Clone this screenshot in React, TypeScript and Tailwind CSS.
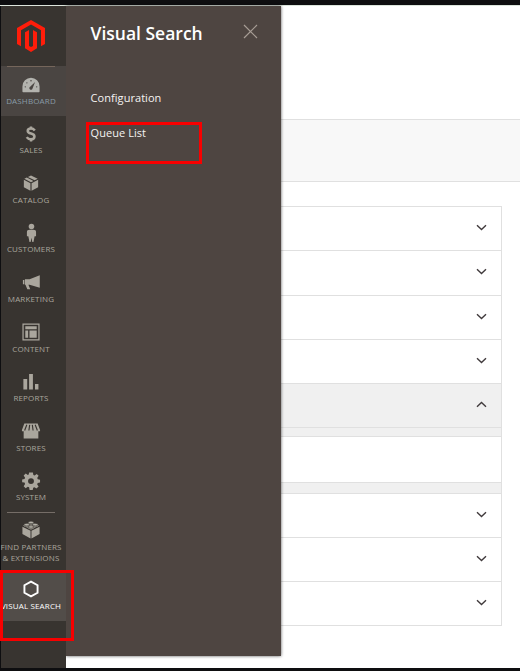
import type { ReactNode } from "react";

const icons: Record<string, ReactNode> = {
  dashboard: (
    <>
      <path d="M1 17.800V12.500a9 9 0 0 1 18 0v5.300q0 .8-.8.8H1.800q-.8 0-.8-.8Z" />
      <path d="m14.300 8-2.700 6.600a1.700 1.700 0 1 1-2.500-1.700Z" fill="#4a4542" />
      <g fill="#4a4542">
        <circle cx="4" cy="13" r=".7" />
        <circle cx="5.700" cy="8.800" r=".7" />
        <circle cx="10" cy="6.500" r=".8" />
        <circle cx="16" cy="13" r=".7" />
      </g>
    </>
  ),
  sales: (
    <>
      <path d="M14 6.300C12.800 4.800 11.600 4.300 10 4.300c-2.100 0-3.400 1-3.400 2.500 0 3.700 7 1.800 7 5.700 0 1.900-1.500 3-3.700 3-1.800 0-3.400-.7-4.400-2.200" fill="none" stroke="currentColor" strokeWidth="2.700" />
      <path d="M8.700 2h2.600v3H8.700zM8.700 15h2.600v3H8.700z" />
    </>
  ),
  catalog: (
    <>
      <path d="m2.500 6.700 6.900 3.500v8L2.500 14.500ZM17.500 6.700l-6.900 3.500v8l6.900-3.700Z" />
      <path d="m3 5.500 2.600-1.300 7 3.700L10 9.100ZM6.800 3.600 10 2l7 3.500-3.200 1.700Z" />
    </>
  ),
  customers: (
    <>
      <circle cx="10.500" cy="3.200" r="2.900" />
      <path d="M8.500 6.700h4q2.800 0 2.800 2.500v4.300h-1.500l-1.200 6h-1.200l-.9-4.400-.9 4.400H8.400l-1.200-6H5.700V9.200Q5.700 6.700 8.500 6.700Z" />
    </>
  ),
  marketing: (
    <path d="M19.200 3v13l-10.700-3.200H7.300l1.900 4.700H6.100L4.200 12.800H3.600V7.200H8.500ZM1.500 7.800h1.500v4.500H1.500Z" />
  ),
  content: (
    <>
      <path d="M1 1h18v18H1ZM2.300 2.300v15.400h15.400V2.300Z" fillRule="evenodd" />
      <path d="M4 4h12v3H4ZM4 8.300h3V16H4ZM8.400 8.300H16V16H8.400Z" />
    </>
  ),
  reports: <path d="M2 6.800h4v11H2ZM8 1.500h4v16.300H8ZM14.200 12h3.600v5.800h-3.600Z" />,
  stores: (
    <>
      <path d="M3 2h14l2.500 7v1.300H.5V9ZM2.300 10h15.400v8H2.300Z" />
      <path d="M5.600 3.500 3.300 9.500M8.600 3.500 7.800 9.500M11.400 3.500l.8 6M14.400 3.500l2.300 6" fill="none" stroke="#383430" strokeWidth="1.200" />
    </>
  ),
  system: (
    <path fillRule="evenodd" d="M8 1h4l.5 2.600 1.300.5 2.200-1.500 2 2-1.500 2.200.7 1.400 2.300.4v3l-2.500.5-.5 1.500 1.500 2.100-2.300 2.300-2.100-1.500-1.300.5-.5 2.500H8.500L8 16.500l-1.400-.5-2.200 1.500-2.100-2.100 1.500-2.300-.6-1.400L.7 11.300v-3l2.500-.5.6-1.300L2.300 4.300l2.200-2.100 2.100 1.500L7.600 3.200ZM10 7a3.100 3.100 0 1 0 0 6.200A3.100 3.100 0 0 0 10 7Z" />
  ),
  partners: (
    <>
      <path d="m1 6.500 8.500 4.300V19L1 14.300ZM19 6.500l-8.500 4.300V19l8.500-4.700Z" />
      <path d="m1.500 5.300 8.500-4 8.500 4L10 9.800Z" />
      <g fill="#b4b1a8" stroke="#383430" strokeWidth=".6">
        <path d="M7.200 2v1.300c0 1.500 5.600 1.500 5.600 0V2" />
        <ellipse cx="10" cy="2" rx="2.800" ry="1.300" />
        <path d="M2.800 4.400v1.300c0 1.500 5.500 1.500 5.500 0V4.400" />
        <ellipse cx="5.500" cy="4.400" rx="2.800" ry="1.300" />
        <path d="M11.700 4.400v1.300c0 1.500 5.500 1.500 5.500 0V4.400" />
        <ellipse cx="14.500" cy="4.400" rx="2.800" ry="1.300" />
        <path d="M7.200 6.800v1.300c0 1.500 5.600 1.500 5.600 0V6.800" />
        <ellipse cx="10" cy="6.800" rx="2.800" ry="1.300" />
      </g>
    </>
  ),
  visual: <path d="m10 2.200 6.900 3.900v7.800L10 17.800l-6.900-3.900V6.100Z" fill="none" stroke="currentColor" strokeWidth="2" />,
};

const menu = [
  ["dashboard", "DASHBOARD"],
  ["sales", "SALES"],
  ["catalog", "CATALOG"],
  ["customers", "CUSTOMERS"],
  ["marketing", "MARKETING"],
  ["content", "CONTENT"],
  ["reports", "REPORTS"],
  ["stores", "STORES"],
  ["system", "SYSTEM"],
];

function NavItem({ icon, children, className = "text-[#aaa69d]" }: { icon: string; children: ReactNode; className?: string }) {
  return (
    <a className={`flex shrink-0 flex-col items-center pt-[8px] pr-[5px] ${className}`}>
      <svg className="size-5 shrink-0" viewBox="-0.500 -0.500 21 21" fill="currentColor">
        {icons[icon]}
      </svg>
      <span className="mt-[.6px] text-center text-[8px] leading-[11px] tracking-[0.150px] whitespace-nowrap">{children}</span>
    </a>
  );
}

function Chevron({ up = false }: { up?: boolean }) {
  return (
    <svg className="h-[7px] w-[11px]" viewBox="0 0 11 7" fill="none" stroke="#403a3c" strokeWidth="1.400">
      <path d={up ? "M1 5.800 5.500 1.500 10 5.800" : "M1 1.200 5.500 5.500 10 1.200"} />
    </svg>
  );
}

function Row({ height, open = false }: { height: string; open?: boolean }) {
  return (
    <div className={`flex items-center justify-end border-t border-[#e0e0e0] pr-[14.500px] pb-[3px] ${height} ${open ? "bg-[#f0f0f0]" : "bg-white"}`}>
      <Chevron up={open} />
    </div>
  );
}

export default function App() {
  return (
    <div className="relative flex h-[671px] w-[520px] flex-col overflow-hidden bg-[#0e0e10] font-['Open_Sans','Noto_Sans',sans-serif]">
      <div className="mt-[5px] h-px shrink-0 bg-[#dce5dc]" />
      <div className="ml-px flex h-[662px] shrink-0 bg-white">
        <nav className="relative z-10 flex w-[65px] shrink-0 flex-col bg-[#383430]">
          <div className="flex h-[60px] shrink-0 justify-center pt-[14px] pr-[5px]">
            <svg className="h-8 w-[28px]" viewBox="0 0 28 32" fill="#ff1d0a">
              <path d="m14 0 14 8v16l-4 2.300V10.300L14 4.600 4 10.300v16L0 24V8Z" />
              <path d="m8 12.300 4-2.200v15.800l2 1.200 2-1.200V10.100l4 2.200v16L14 32l-6-3.700Z" />
            </svg>
          </div>
          {menu.map(([icon, label], i) => (
            <div key={icon} className={i === 0 ? "h-[49.600px] shrink-0 bg-[#4a4542]" : "h-[49.600px] shrink-0"}>
              {i === 0 && <div className="-mb-px ml-[6px] h-px w-12 bg-[#75665b]" />}
              <NavItem icon={icon} className={i === 0 ? "text-[#b3b3ae] [&_span]:text-[#899ba5]" : "text-[#aaa69d]"}>{label}</NavItem>
            </div>
          ))}
          <div className="h-[58.600px] shrink-0">
            <div className="-mb-px ml-[6px] h-px w-12 bg-[#756d67]" />
            <NavItem icon="partners">FIND PARTNERS<br />&amp; EXTENSIONS</NavItem>
          </div>
          <NavItem icon="visual" className="h-[50px] bg-[#524d49] text-white">VISUAL SEARCH</NavItem>
        </nav>
        <aside className="relative h-[650px] w-[215px] shrink-0 bg-[#4e4541] shadow-[0_0_3px_#000a]">
          <header className="flex items-start justify-between pt-[14px] pr-[23px] pl-[24.500px]">
            <h1 className="text-[17.500px] leading-[26px] font-semibold text-white">Visual Search</h1>
            <svg className="mt-[3.500px] size-[15px]" viewBox="0 0 15 15" stroke="#a79d95" strokeWidth="1.200">
              <path d="m1 1 13 13M14 1 1 14" />
            </svg>
          </header>
          <div className="mt-[43px] flex flex-col gap-[17px] pl-[24.600px] text-[11px] leading-[18px] tracking-[0.050px] text-[#f5f3f1]">
            <a>Configuration</a>
            <a>Queue List</a>
          </div>
        </aside>
        <main className="flex min-w-0 flex-1 flex-col">
          <div className="mt-[113px] h-[63px] shrink-0 border-y border-[#e0e0e0] bg-[#f8f8f8]" />
          <section className="mt-6 mr-[18px] border-r border-b border-[#e0e0e0]">
            <Row height="h-[44px]" />
            <Row height="h-[45px]" />
            <Row height="h-[44px]" />
            <Row height="h-[44px]" />
            <Row height="h-[44px]" open />
            <div className="h-[66px] border-t border-[#e0e0e0] bg-[#f0f0f0] pt-2">
              <div className="h-[47px] border-y border-[#e0e0e0] bg-white" />
            </div>
            <Row height="h-[44px]" />
            <Row height="h-[44px]" />
            <Row height="h-[44px]" />
          </section>
        </main>
      </div>
      <div className="absolute top-[122px] left-[86px] z-20 h-[42px] w-[116px] border-[3px] border-[#f70000]" />
      <div className="absolute top-[570px] left-0 z-20 h-[71px] w-[74px] border-[3px] border-[#f70000]" />
    </div>
  );
}
